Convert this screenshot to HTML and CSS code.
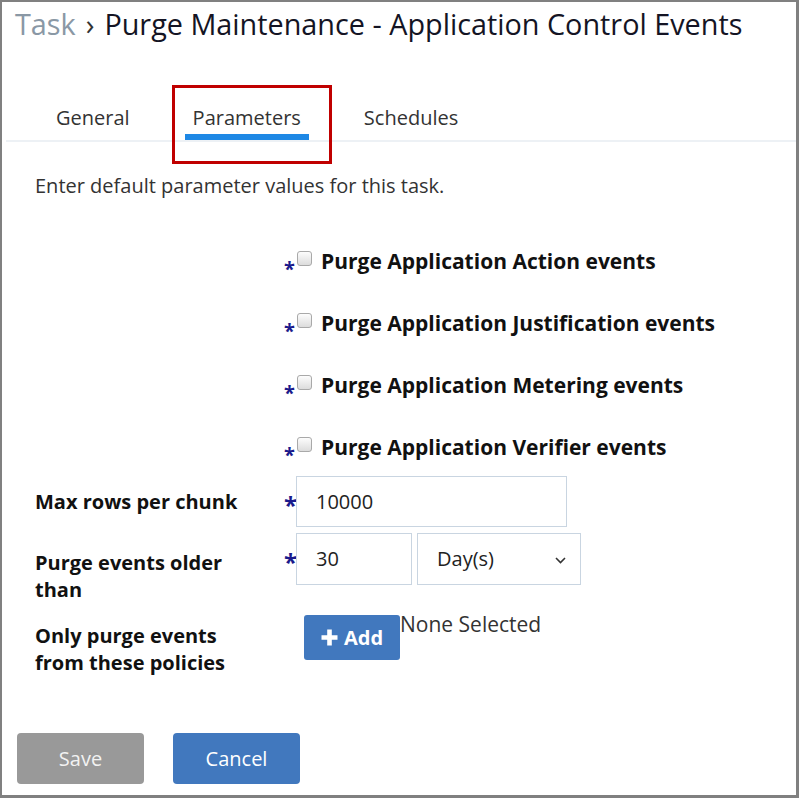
FILE: index.html
```html
<!DOCTYPE html>
<html lang="en">
<head>
<meta charset="utf-8">
<title>Task › Purge Maintenance - Application Control Events</title>
<link rel="stylesheet" href="styles.css">
</head>
<body>
<div class="frame">
  <h1 class="title"><span class="crumb">Task</span><span class="sep">›</span>Purge Maintenance - Application Control Events</h1>

  <nav class="tabs">
    <span class="tab">General</span>
    <span class="tab active">Parameters</span>
    <span class="tab">Schedules</span>
  </nav>
  <div class="highlight"></div>

  <p class="intro">Enter default parameter values for this task.</p>

  <div class="form">
    <div class="row check-row">
      <span class="label"></span>
      <span class="req small">*</span>
      <label class="field"><span class="checkbox"></span><span class="check-label">Purge Application Action events</span></label>
    </div>
    <div class="row check-row">
      <span class="label"></span>
      <span class="req small">*</span>
      <label class="field"><span class="checkbox"></span><span class="check-label">Purge Application Justification events</span></label>
    </div>
    <div class="row check-row">
      <span class="label"></span>
      <span class="req small">*</span>
      <label class="field"><span class="checkbox"></span><span class="check-label">Purge Application Metering events</span></label>
    </div>
    <div class="row check-row">
      <span class="label"></span>
      <span class="req small">*</span>
      <label class="field"><span class="checkbox"></span><span class="check-label">Purge Application Verifier events</span></label>
    </div>

    <div class="row input-row row-a">
      <span class="label label-center">Max rows per chunk</span>
      <span class="req big">*</span>
      <div class="field">
        <div class="input wide">10000</div>
      </div>
    </div>
    <div class="row input-row row-b">
      <span class="label label-top">Purge events older than</span>
      <span class="req big">*</span>
      <div class="field">
        <div class="input narrow">30</div>
        <div class="input select">Day(s)
          <svg class="chev" width="11" height="7" viewBox="0 0 11 7"><path d="M1 1 L5.5 5.5 L10 1" fill="none" stroke="#333" stroke-width="1.6"/></svg>
        </div>
      </div>
    </div>
    <div class="row row-c">
      <span class="label label-c">Only purge events from these policies</span>
      <span class="req"></span>
      <div class="field field-c">
        <button class="add-btn" type="button"><svg class="plus" width="17" height="17" viewBox="0 0 17 17"><path d="M6.2 0.5h4.6v5.7h5.7v4.6h-5.7v5.7H6.2v-5.7H0.5V6.2h5.7z" fill="#fff"/></svg>Add</button>
        <span class="none">None Selected</span>
      </div>
    </div>
  </div>

  <div class="footer">
    <button class="btn save" type="button">Save</button>
    <button class="btn cancel" type="button">Cancel</button>
  </div>
</div>
</body>
</html>
```
FILE: styles.css
```css
html, body {
  margin: 0;
  padding: 0;
  background: #ffffff;
}

.frame {
  position: relative;
  width: 799px;
  height: 798px;
  box-sizing: border-box;
  border-style: solid;
  border-color: #808080;
  border-width: 2px 3px 3px 2px;
  font-family: "Open Sans", "Liberation Sans", sans-serif;
  font-size: 20px;
  color: #222;
  overflow: hidden;
}

.title {
  margin: 3px 0 0 13px;
  font-size: 28.8px;
  line-height: 38px;
  font-weight: 400;
  color: #141424;
  white-space: nowrap;
}

.crumb {
  color: #8a98a5;
}

.sep {
  color: #333;
  margin: 0 10px 0 10px;
}

.tabs {
  display: flex;
  gap: 47px;
  margin: 61px 0 0 4px;
  padding-left: 42px;
  border-bottom: 2px solid #edf1f5;
}

.tab {
  padding: 0 8px 3px;
  line-height: 27px;
  color: #333;
  border-bottom: 6px solid transparent;
}

.tab.active {
  border-bottom-color: #1e88e5;
}

.highlight {
  position: absolute;
  left: 170px;
  top: 83px;
  width: 160px;
  height: 79px;
  box-sizing: border-box;
  border: 3px solid #c00000;
}

.intro {
  margin: 30px 0 0 33px;
  line-height: 27px;
  color: #333;
}

.form {
  margin: 49px 0 0 33px;
}

.row {
  display: grid;
  grid-template-columns: 249px 12px 1fr;
}

.check-row {
  grid-template-rows: 27px;
  margin-bottom: 35px;
  line-height: 27px;
}

.check-row:nth-child(4) {
  margin-bottom: 15px;
}

.label {
  font-weight: 700;
  line-height: 27px;
  color: #111;
  width: 230px;
}

.label-center {
  align-self: center;
}

.label-top {
  padding-top: 16px;
}

.label-c {
  padding-top: 11px;
}

.req {
  color: #1a1a8c;
  font-weight: 700;
  line-height: 20px;
}

.req.small {
  font-size: 20px;
  margin-top: 11px;
}

.req.big {
  font-size: 24px;
  margin-top: 19px;
}

.field {
  display: flex;
  align-items: flex-start;
}

.checkbox {
  width: 15px;
  height: 15px;
  box-sizing: border-box;
  margin: 3px 0 0 1px;
  border: 1px solid #a9a9a9;
  border-radius: 3px;
  background: linear-gradient(#fdfdfd, #dcdcdc);
  flex-shrink: 0;
}

.check-label {
  margin-left: 9px;
  font-size: 21px;
  font-weight: 700;
  color: #111;
  white-space: nowrap;
}

.input {
  box-sizing: border-box;
  height: 51px;
  border: 1px solid #c9d5e1;
  padding: 0 0 0 19px;
  line-height: 49px;
  color: #222;
  background: #fff;
}

.input.wide {
  width: 271px;
}

.input.narrow {
  width: 116px;
}

.row-b .input {
  height: 52px;
  line-height: 50px;
}

.input.select {
  width: 164px;
  margin-left: 5px;
  padding-left: 19px;
  display: flex;
  align-items: center;
  justify-content: space-between;
  padding-right: 14px;
}

.chev {
  display: block;
  margin-top: 2px;
}

.row-a {
  margin-bottom: 6px;
}

.row-b {
  margin-bottom: 8px;
}

.field-c {
  align-items: flex-start;
}

.add-btn {
  margin: 4px 0 0 8px;
  width: 96px;
  height: 45px;
  border: none;
  border-radius: 3px;
  background: #4178be;
  color: #fff;
  font-family: "Open Sans", "Liberation Sans", sans-serif;
  font-size: 20px;
  font-weight: 700;
  display: flex;
  align-items: center;
  justify-content: center;
  gap: 6px;
  padding: 0;
}

.plus {
  display: block;
}

.none {
  font-size: 21px;
  line-height: 27px;
  color: #333;
}

.footer {
  display: flex;
  gap: 29px;
  margin: 57px 0 0 15px;
}

.btn {
  width: 127px;
  height: 51px;
  border: none;
  border-radius: 4px;
  font-family: "Open Sans", "Liberation Sans", sans-serif;
  font-size: 20px;
  color: #fff;
  padding: 0;
}

.btn.save {
  background: #999999;
  color: #f2f2f2;
}

.btn.cancel {
  background: #4178be;
}
```
